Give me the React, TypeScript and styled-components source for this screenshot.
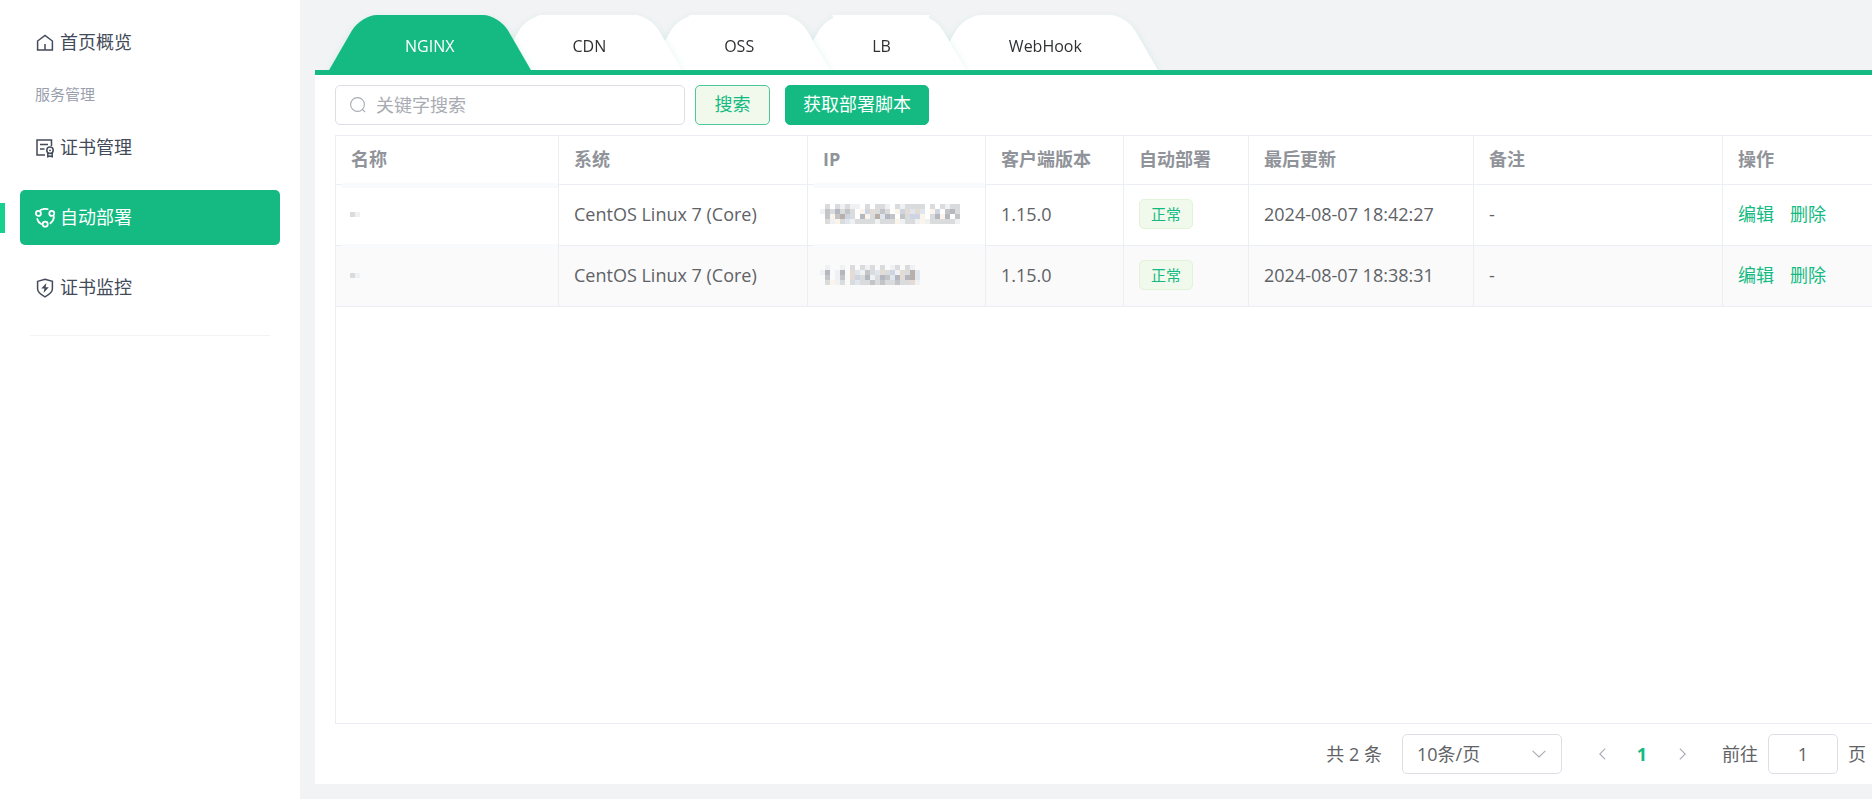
import React, { useState } from 'react';
import styled, { createGlobalStyle, css } from 'styled-components';

const green = '#14ba82';
const line = '#ebeef5';
const border = '#dcdfe6';

const Global = createGlobalStyle`
  *, *::before, *::after { box-sizing: border-box; }
  html, body, #root { height: 100%; }
  body {
    margin: 0;
    background: #f2f3f5;
    color: #606266;
    font: 400 18px/24px "Open Sans", "Noto Sans CJK SC", sans-serif;
  }
  button, input, select { font: inherit; color: inherit; }
  button, select { cursor: pointer; }
`;

const Page = styled.div`
  display: flex;
  min-height: 100%;
`;

const Sidebar = styled.nav`
  flex: 0 0 300px;
  background: #fff;
  padding: 15px 0;
`;

const MenuItem = styled.a<{ $active?: boolean }>`
  display: flex;
  align-items: center;
  gap: 5px;
  position: relative;
  height: 55px;
  margin: 0 20px 15px;
  padding: 0 15px;
  border-radius: 5px;
  text-decoration: none;
  color: ${(p) => (p.$active ? '#fff' : '#434a59')};
  background: ${(p) => (p.$active ? green : 'transparent')};

  &::before {
    content: '';
    display: ${(p) => (p.$active ? 'block' : 'none')};
    position: absolute;
    left: -20px;
    top: 13px;
    width: 5px;
    height: 30px;
    background: #17d090;
  }
`;

const MenuText = styled.span`
  padding-bottom: 2px;
`;

const MenuLabel = styled.h2`
  margin: 0 35px 15px;
  padding-bottom: 2px;
  font-size: 15px;
  line-height: 18px;
  font-weight: 400;
  color: #9a9fae;
`;

const MenuLine = styled.hr`
  margin: 20px 30px;
  border: 0;
  border-top: 1px solid #f2f3f5;
`;

const MenuSvg = styled.svg<{ $stroke?: number }>`
  flex: none;
  width: 20px;
  height: 20px;
  fill: none;
  stroke: currentColor;
  stroke-width: ${(p) => p.$stroke ?? 1.5};
  stroke-linecap: ${(p) => (p.$stroke ? 'round' : 'butt')};
`;

const Main = styled.main`
  flex: 1;
  min-width: 0;
  display: flex;
  flex-direction: column;
  padding: 15px 0 15px 15px;
`;

const Tabs = styled.div`
  display: flex;
  padding-left: 14px;
`;

const Tab = styled.button<{ $active: boolean; $level: number }>`
  position: relative;
  z-index: ${(p) => p.$level};
  height: 55px;
  margin-right: -34px;
  padding: 7px 76px 0;
  border: 0;
  background: none;
  font-size: 16px;
  color: ${(p) => (p.$active ? '#fff' : '#303133')};
  filter: drop-shadow(0 4px 4px rgba(20, 186, 130, 0.2));

  &::before,
  &::after {
    content: '';
    position: absolute;
    z-index: -1;
    top: 0;
    bottom: 0;
    width: 60%;
    background: ${(p) => (p.$active ? green : '#fff')};
  }
  &::before {
    left: 16px;
    border-top-left-radius: 16px;
    transform: skewX(-30deg);
  }
  &::after {
    right: 16px;
    border-top-right-radius: 16px;
    transform: skewX(30deg);
  }
`;

const Panel = styled.section`
  position: relative;
  z-index: 10;
  flex: 1;
  display: flex;
  flex-direction: column;
  gap: 10px;
  padding: 10px 0 10px 20px;
  background: #fff;
  border-top: 5px solid ${green};
`;

const Toolbar = styled.form`
  display: flex;
`;

const SearchBox = styled.label`
  display: flex;
  align-items: center;
  gap: 10px;
  width: 350px;
  height: 40px;
  margin-right: 10px;
  padding: 0 14px;
  border: 1px solid ${border};
  border-radius: 5px;

  svg { flex: none; }
  input {
    flex: 1;
    min-width: 0;
    padding: 0;
    border: 0;
    outline: 0;
    background: none;
  }
  input::placeholder { color: #a8abb2; opacity: 1; }
`;

const Button = styled.button<{ $plain?: boolean }>`
  min-width: 75px;
  height: 40px;
  margin-right: 15px;
  padding: 0 17px 2px;
  border: 1px solid ${(p) => (p.$plain ? '#4bc79a' : green)};
  border-radius: 5px;
  background: ${(p) => (p.$plain ? '#f0f9eb' : green)};
  color: ${(p) => (p.$plain ? green : '#fff')};
`;

const TableBox = styled.div`
  flex: 1;
  border: 1px solid ${line};
  border-right: 0;
`;

const Table = styled.table`
  width: 100%;
  table-layout: fixed;
  border-collapse: separate;
  border-spacing: 0;
  text-align: left;
`;

const Col = styled.col<{ $w?: number }>`
  width: ${(p) => (p.$w ? `${p.$w}px` : 'auto')};
`;

const cell = css`
  padding: 0 15px 2px;
  border-bottom: 1px solid ${line};
  border-right: 1px solid ${line};
  white-space: nowrap;
  &:last-child { border-right: 0; }
`;

const Th = styled.th`
  ${cell}
  height: 49px;
  font-weight: 700;
  color: #909399;
`;

const Row = styled.tr<{ $striped: boolean }>`
  background: ${(p) => (p.$striped ? '#fafafa' : '#fff')};
`;

const Td = styled.td`
  ${cell}
  height: 61px;
`;

const MaskedTd = styled(Td)<{ $inset: number }>`
  position: relative;
  padding-left: ${(p) => p.$inset * 2}px;
  &::before {
    content: '';
    position: absolute;
    top: -2px;
    left: 6px;
    right: 0;
    height: 5px;
    background: #f9fafc;
  }
`;

const Mosaic = styled.svg`
  display: block;
`;

const Tag = styled.span`
  display: inline-block;
  padding: 0 11px;
  border: 1px solid #e1f3d8;
  border-radius: 5px;
  background: #f0f9eb;
  color: ${green};
  font-size: 15px;
  line-height: 28px;
  vertical-align: middle;
`;

const Action = styled.a`
  margin-right: 16px;
  color: ${green};
  text-decoration: none;
`;

const Pagination = styled.div`
  display: flex;
  align-items: center;
  justify-content: flex-end;
  gap: 20px;
  padding-right: 6px;
`;

const SizeSelect = styled.div`
  display: grid;
  align-items: center;
  width: 160px;

  select, svg { grid-area: 1 / 1; }
  select {
    height: 40px;
    padding: 0 14px;
    border: 1px solid ${border};
    border-radius: 5px;
    background: #fff;
    appearance: none;
  }
  svg {
    justify-self: end;
    margin-right: 16px;
    pointer-events: none;
  }
`;

const Pager = styled.div`
  display: flex;
`;

const PageButton = styled.button<{ $current?: boolean }>`
  display: flex;
  align-items: center;
  justify-content: center;
  width: 40px;
  height: 40px;
  padding: 0;
  border: 0;
  background: none;
  font-weight: 700;
  color: ${(p) => (p.$current ? green : '#a8abb2')};
`;

const Jump = styled.label`
  display: flex;
  align-items: center;
  gap: 10px;

  input {
    width: 70px;
    height: 40px;
    padding: 0 10px;
    border: 1px solid ${border};
    border-radius: 5px;
    text-align: center;
  }
`;

const HomeIcon = () => (
  <MenuSvg viewBox="0 0 20 20" aria-hidden="true">
    <path d="M2.6 17V8L10 2.4 17.4 8v9zM10 11v6" />
  </MenuSvg>
);

const CertIcon = () => (
  <MenuSvg viewBox="0 0 20 20" aria-hidden="true">
    <path d="M10 17H2V2h14.5v6M5 6.5h8M5 11h4.5" />
    <circle cx="15" cy="12.3" r="3.2" />
    <circle cx="15" cy="12.3" r="0.9" fill="currentColor" stroke="none" />
    <path d="M12.8 14.8v4l2.2-.8 2.2.8v-4" />
  </MenuSvg>
);

const DeployIcon = () => (
  <MenuSvg viewBox="0 0 20 20" aria-hidden="true" $stroke={1.8}>
    <circle cx="3.4" cy="5.4" r="2.5" />
    <circle cx="16.8" cy="5.4" r="2.5" />
    <circle cx="10.2" cy="16.2" r="2.5" />
    <path d="M5.6 2Q9 .2 12.6 1.2M2.2 11q1 3.6 4 5M18.8 8.6q.2 4-3.4 6.600" />
  </MenuSvg>
);

const ShieldIcon = () => (
  <MenuSvg viewBox="0 0 20 20" aria-hidden="true">
    <path d="M2.6 3.4 10 1.4l7.4 2v7.4c0 3.4-3.4 6-7.4 8-4-2-7.4-4.6-7.4-8z" />
    <path d="M11.4 5 6.2 10.6h3.2L8.6 15l5.200-5.800h-3.200z" fill="currentColor" stroke="none" />
  </MenuSvg>
);

const shades: Record<string, string> = {
  a: '#f0f1f3',
  b: '#dadbdd',
  c: '#c2c4c8',
  d: '#b4b7bf',
  e: '#fbf4ea',
  f: '#e3dbd4',
  g: '#cdd5e2',
  h: '#dfe6ee',
  i: '#b9afaa',
};

function MaskedText({ rows, label }: { rows: string[]; label: string }) {
  const width = rows[0].length * 5;
  const height = rows.length * 5;
  return (
    <Mosaic width={width} height={height} role="img" aria-label={label} shapeRendering="crispEdges">
      {rows.flatMap((r, y) =>
        [...r].map((c, x) =>
          shades[c] ? <rect key={`${x}-${y}`} x={x * 5} y={y * 5} width="5" height="5" fill={shades[c]} /> : null,
        ),
      )}
    </Mosaic>
  );
}

const menu = [
  { text: '证书管理', icon: <CertIcon /> },
  { text: '自动部署', icon: <DeployIcon />, active: true },
  { text: '证书监控', icon: <ShieldIcon /> },
];

const tabs = ['NGINX', 'CDN', 'OSS', 'LB', 'WebHook'];

const columns = [
  { title: '名称', width: 223 },
  { title: '系统', width: 249 },
  { title: 'IP', width: 178 },
  { title: '客户端版本', width: 138 },
  { title: '自动部署', width: 125 },
  { title: '最后更新', width: 225 },
  { title: '备注', width: 249 },
  { title: '操作' },
];

const hosts = [
  {
    system: 'CentOS Linux 7 (Core)',
    ip: [
      '.b.babaa.b.bba.babbbb.b.babb',
      'acbdbcb.egfbcb.egfhfh.eg.cdb',
      '.cecigb.debihdc.cbgge.bded.c',
      '.baebhabbbbabbbeabbaeabbbbba',
    ],
    version: '1.15.0',
    status: '正常',
    updated: '2024-08-07 18:42:27',
    remark: '-',
  },
  {
    system: 'CentOS Linux 7 (Core)',
    ip: [
      '.a..a.b.bab.b.ab.ba.',
      'ad.ad.fhacbhfbgafbih',
      '.c.ac.fgbdabdchdfdih',
      '.beab.bhbbcbcbbcbbfa',
    ],
    version: '1.15.0',
    status: '正常',
    updated: '2024-08-07 18:38:31',
    remark: '-',
  },
];

export default function App() {
  const [tab, setTab] = useState(tabs[0]);

  return (
    <Page>
      <Global />
      <Sidebar>
        <MenuItem href="#home"><HomeIcon /><MenuText>首页概览</MenuText></MenuItem>
        <MenuLabel>服务管理</MenuLabel>
        {menu.map((m) => (
          <MenuItem key={m.text} href="#" $active={m.active}>{m.icon}<MenuText>{m.text}</MenuText></MenuItem>
        ))}
        <MenuLine />
      </Sidebar>

      <Main>
        <Tabs role="tablist">
          {tabs.map((t, i) => (
            <Tab
              key={t}
              type="button"
              role="tab"
              aria-selected={t === tab}
              $active={t === tab}
              $level={t === tab ? tabs.length + 1 : tabs.length - i}
              onClick={() => setTab(t)}
            >
              {t}
            </Tab>
          ))}
        </Tabs>

        <Panel>
          <Toolbar onSubmit={(e) => e.preventDefault()}>
            <SearchBox>
              <svg width="16" height="16" viewBox="0 0 16 16" fill="none" stroke="#a8abb2" strokeWidth="1.1" aria-hidden="true">
                <circle cx="7.5" cy="7.5" r="6.9" />
                <path d="m12.4 12.4 2.8 2.8" />
              </svg>
              <input type="text" placeholder="关键字搜索" aria-label="关键字搜索" />
            </SearchBox>
            <Button type="submit" $plain>搜索</Button>
            <Button type="button">获取部署脚本</Button>
          </Toolbar>

          <TableBox>
            <Table>
              <colgroup>
                {columns.map((c) => <Col key={c.title} $w={c.width} />)}
              </colgroup>
              <thead>
                <tr>{columns.map((c) => <Th key={c.title} scope="col">{c.title}</Th>)}</tr>
              </thead>
              <tbody>
                {hosts.map((h, i) => (
                  <Row key={h.updated} $striped={i % 2 === 1}>
                    <MaskedTd $inset={7}><MaskedText rows={['ba']} label="名称" /></MaskedTd>
                    <Td>{h.system}</Td>
                    <MaskedTd $inset={6}><MaskedText rows={h.ip} label="IP" /></MaskedTd>
                    <Td>{h.version}</Td>
                    <Td><Tag>{h.status}</Tag></Td>
                    <Td>{h.updated}</Td>
                    <Td>{h.remark}</Td>
                    <Td>
                      <Action href="#edit">编辑</Action>
                      <Action href="#delete">删除</Action>
                    </Td>
                  </Row>
                ))}
              </tbody>
            </Table>
          </TableBox>

          <Pagination>
            <span>共 2 条</span>
            <SizeSelect>
              <select aria-label="每页条数" defaultValue="10">
                <option value="10">10条/页</option>
                <option value="20">20条/页</option>
              </select>
              <svg width="14" height="8" viewBox="0 0 14 8" fill="none" stroke="#a8abb2" strokeWidth="1.1" aria-hidden="true">
                <path d="M.6.8 7 7 13.4.8" />
              </svg>
            </SizeSelect>
            <Pager>
              <PageButton type="button" aria-label="上一页">
                <svg width="7" height="12" viewBox="0 0 7 12" fill="none" stroke="currentColor" strokeWidth="1.1">
                  <path d="M6.2.6.8 6l5.400 5.400" />
                </svg>
              </PageButton>
              <PageButton type="button" $current>1</PageButton>
              <PageButton type="button" aria-label="下一页">
                <svg width="7" height="12" viewBox="0 0 7 12" fill="none" stroke="currentColor" strokeWidth="1.1">
                  <path d="M.8.6 6.200 6 .8 11.400" />
                </svg>
              </PageButton>
            </Pager>
            <Jump>
              前往
              <input type="text" inputMode="numeric" defaultValue="1" />
              页
            </Jump>
          </Pagination>
        </Panel>
      </Main>
    </Page>
  );
}
